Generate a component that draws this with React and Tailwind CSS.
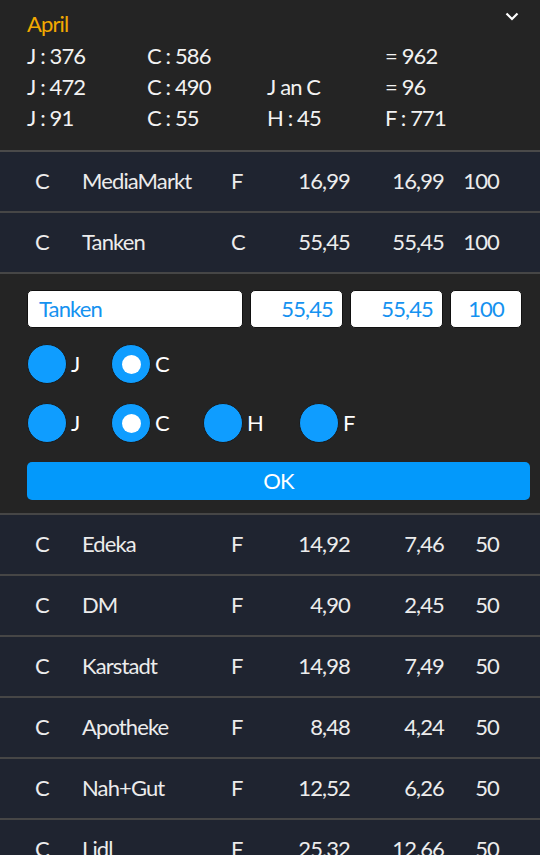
const summary = [
  ['J : 376', 'C : 586', '', '= 962'],
  ['J : 472', 'C : 490', 'J an C', '= 96'],
  ['J : 91', 'C : 55', 'H : 45', 'F : 771'],
]

const topRows = [
  ['C', 'MediaMarkt', 'F', '16,99', '16,99', '100'],
  ['C', 'Tanken', 'C', '55,45', '55,45', '100'],
]

const bottomRows = [
  ['C', 'Edeka', 'F', '14,92', '7,46', '50'],
  ['C', 'DM', 'F', '4,90', '2,45', '50'],
  ['C', 'Karstadt', 'F', '14,98', '7,49', '50'],
  ['C', 'Apotheke', 'F', '8,48', '4,24', '50'],
  ['C', 'Nah+Gut', 'F', '12,52', '6,26', '50'],
  ['C', 'Lidl', 'F', '25,32', '12,66', '50'],
]

function Row({ r }) {
  return (
    <div className="flex h-[61px] shrink-0 items-center border-b-2 border-[#464646] bg-[#1f2430] pb-[2px] pl-[35px] text-[#ececec]">
      <span className="w-[47px]">{r[0]}</span>
      <span className="w-[149px]">{r[1]}</span>
      <span className="w-[60px]">{r[2]}</span>
      <span className="w-[59px] text-right">{r[3]}</span>
      <span className="w-[94px] text-right">{r[4]}</span>
      <span className="w-[55px] text-right">{r[5]}</span>
    </div>
  )
}

function Radio({ label, checked, w }) {
  return (
    <div className={`flex items-center ${w}`}>
      <div className="flex h-10 w-10 items-center justify-center rounded-full border border-[#1a1a1a] bg-[#0f9dff]">
        {checked && <div className="h-[19px] w-[19px] rounded-full bg-white" />}
      </div>
      <span className="ml-1 text-white">{label}</span>
    </div>
  )
}

export default function App() {
  return (
    <div className="flex h-[855px] w-[540px] flex-col overflow-hidden bg-[#1f2430] font-['Lato',sans-serif] text-[22px] leading-none tracking-[-0.04em]">
      <header className="relative h-[152px] shrink-0 border-b-2 border-[#4a4a4a] bg-[#242424] px-[27px] pt-[13px]">
        <div className="h-[25px] text-[#f2a900]">April</div>
        <svg className="absolute right-[21px] top-[12px]" width="14" height="9" viewBox="0 0 14 9" fill="none">
          <path d="M1.5 1.5 L7 7 L12.5 1.5" stroke="white" strokeWidth="2.2" />
        </svg>
        <div className="mt-[7px] flex flex-col gap-[9px] text-[#f2f2f2]">
          {summary.map((line, i) => (
            <div key={i} className="grid h-[22px] grid-cols-[120px_120px_118px_auto] items-center">
              {line.map((c, j) => (
                <span key={j}>{c}</span>
              ))}
            </div>
          ))}
        </div>
      </header>

      {topRows.map((r, i) => (
        <Row key={i} r={r} />
      ))}

      <section className="flex h-[241px] shrink-0 flex-col border-b-2 border-[#464646] bg-[#242424] pl-[27px] pr-[10px] pt-[16px]">
        <div className="flex h-[38px] gap-[7px] text-[#1592f0]">
          <div className="flex w-[216px] items-center rounded-[5px] border border-[#111] bg-white px-[11px]">Tanken</div>
          <div className="flex w-[93px] items-center justify-end rounded-[5px] border border-[#111] bg-white px-[9px]">55,45</div>
          <div className="flex w-[93px] items-center justify-end rounded-[5px] border border-[#111] bg-white px-[9px]">55,45</div>
          <div className="flex w-[72px] items-center justify-center rounded-[5px] border border-[#111] bg-white">100</div>
        </div>
        <div className="mt-[16px] flex">
          <Radio label="J" w="w-[84px]" />
          <Radio label="C" checked w="w-[92px]" />
        </div>
        <div className="mt-[19px] flex">
          <Radio label="J" w="w-[84px]" />
          <Radio label="C" checked w="w-[92px]" />
          <Radio label="H" w="w-[96px]" />
          <Radio label="F" w="w-[60px]" />
        </div>
        <button className="mt-[19px] flex h-[38px] w-[503px] items-center justify-center rounded-[5px] bg-[#0399fb] text-white">
          OK
        </button>
      </section>

      {bottomRows.map((r, i) => (
        <Row key={i} r={r} />
      ))}
    </div>
  )
}
